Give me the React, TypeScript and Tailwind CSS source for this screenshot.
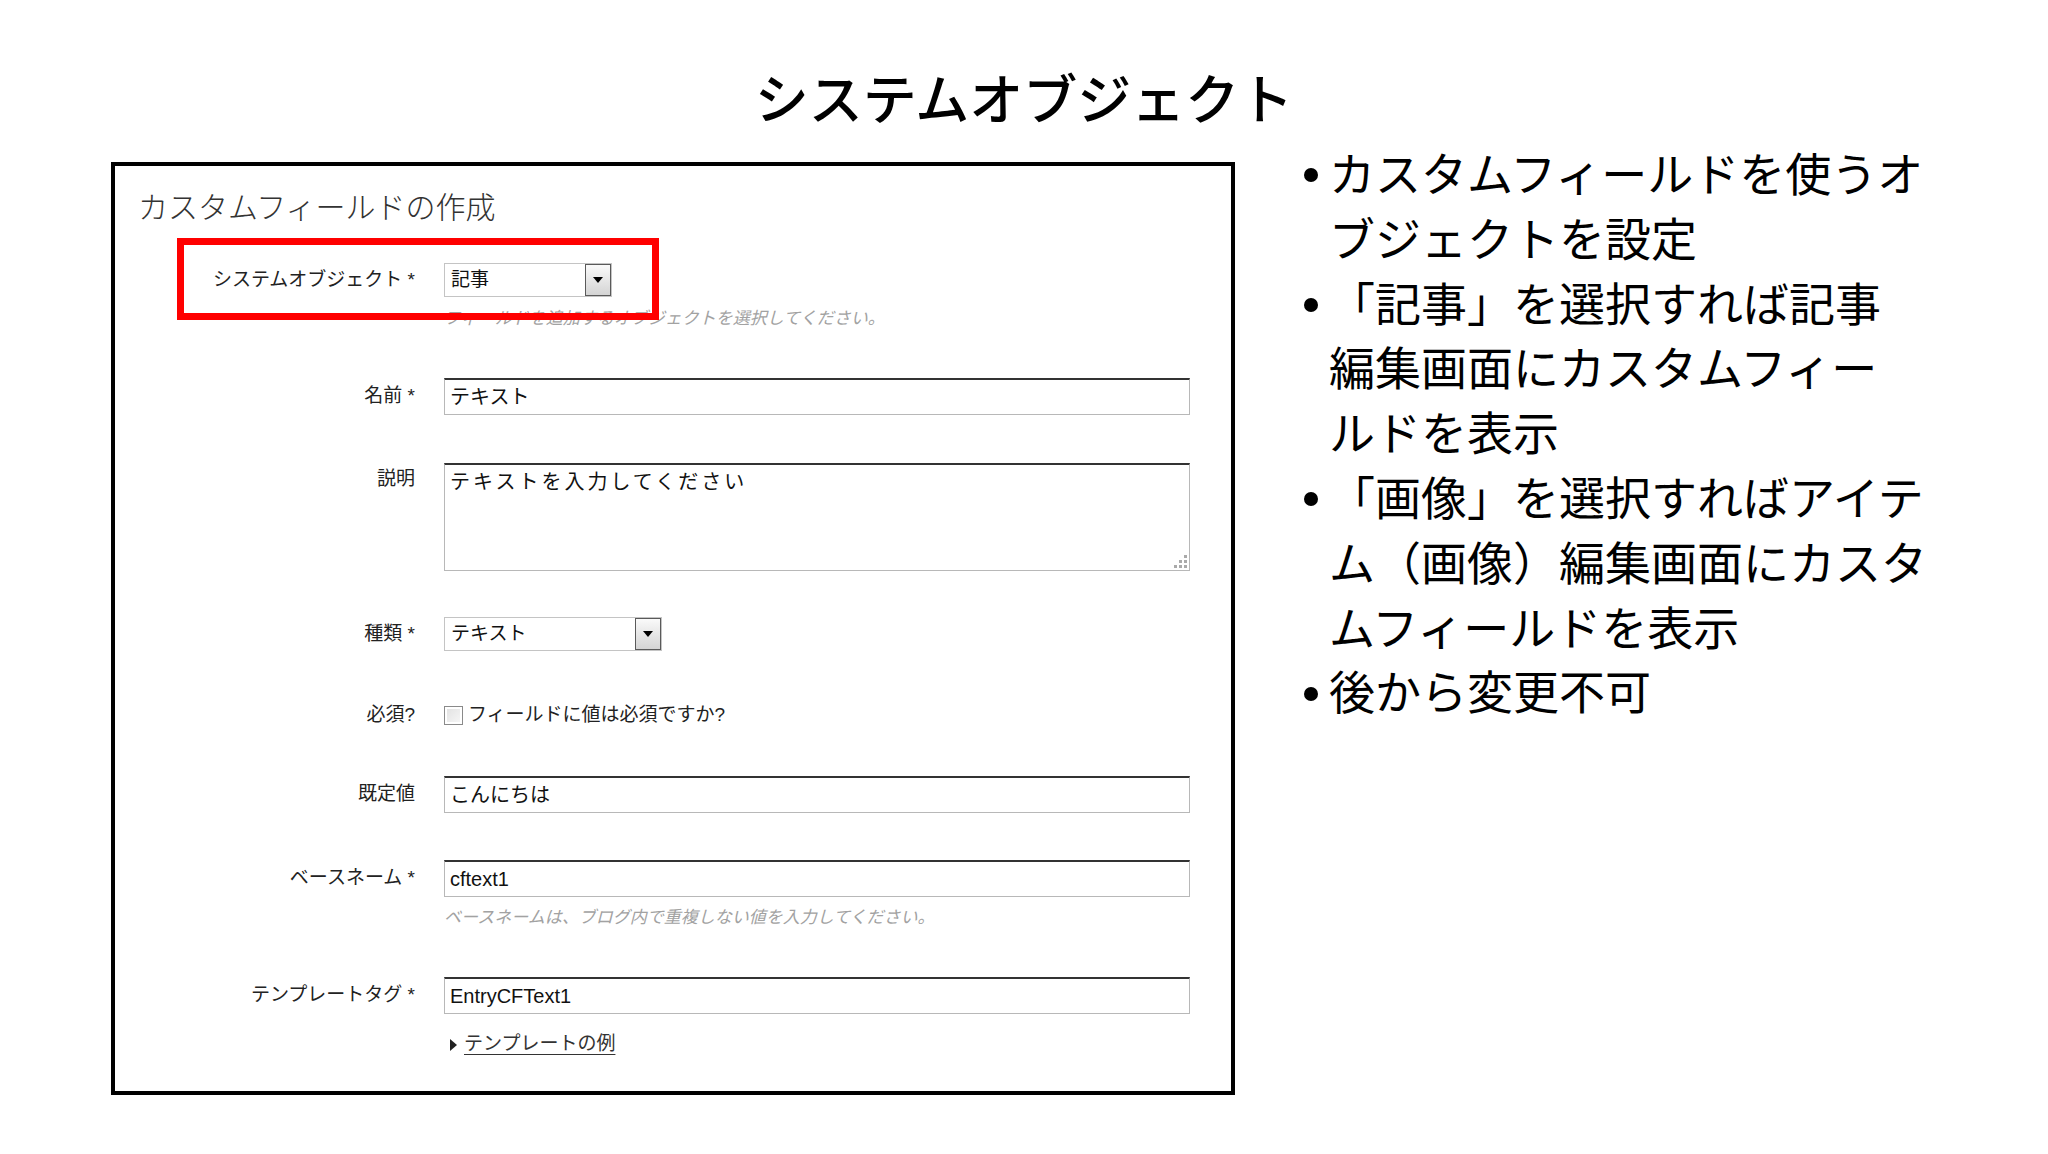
const jp = '[font-family:"Liberation_Sans","Noto_Sans_CJK_JP",sans-serif]';

function Arrow() {
  return (
    <span className="flex h-full w-[26px] items-center justify-center border border-[#5a5a5a] bg-gradient-to-b from-[#fafafa] to-[#d4d4d4]">
      <span className="h-0 w-0 border-x-[5px] border-t-[6px] border-x-transparent border-t-black" />
    </span>
  );
}

function Select({ value, width }: { value: string; width: string }) {
  return (
    <div className={`flex h-[34px] items-center border border-[#c4c4c4] bg-white ${width}`}>
      <span className="flex-1 pl-[6px] text-[19px] text-[#111]">{value}</span>
      <Arrow />
    </div>
  );
}

function TextInput({ value }: { value: string }) {
  return (
    <div className="flex h-[37px] w-[746px] items-center border border-[#b8b8b8] border-t-2 border-t-[#333] bg-white pl-[5px] text-[20px] text-[#111]">
      {value}
    </div>
  );
}

function Row({ label, children, top = false }: { label: string; children: React.ReactNode; top?: boolean }) {
  return (
    <div className={`flex ${top ? 'items-start' : 'items-center'}`}>
      <div className={`w-[300px] text-right text-[19px] text-[#222] ${top ? 'pt-[2px]' : ''}`}>{label}</div>
      <div className="ml-[29px]">{children}</div>
    </div>
  );
}

function Hint({ text }: { text: string }) {
  return <div className="ml-[329px] text-[17px] italic leading-[20px] text-[#a2a2a2]">{text}</div>;
}

const bullets: string[][] = [
  ['カスタムフィールドを使うオ', 'ブジェクトを設定'],
  ['「記事」を選択すれば記事', '編集画面にカスタムフィー', 'ルドを表示'],
  ['「画像」を選択すればアイテ', 'ム（画像）編集画面にカスタ', 'ムフィールドを表示'],
  ['後から変更不可'],
];

export default function App() {
  return (
    <div className={`h-[1154px] w-[2048px] overflow-hidden bg-white text-black ${jp}`}>
      <h1 className="pt-[68px] text-center text-[54px] font-medium leading-[67px]">システムオブジェクト</h1>

      <div className="mt-[8px] flex items-start">
        <div className="relative ml-[111px] mt-[19px] box-border h-[933px] w-[1124px] border-4 border-black">
          <div className="pl-[23px] pt-[24px] text-[30px] font-light leading-[36px] text-[#333]">
            カスタムフィールドの作成
          </div>

          <div className="mt-[37px]">
            <Row label="システムオブジェクト *">
              <Select value="記事" width="w-[168px]" />
            </Row>
          </div>
          <div className="mt-[12px]">
            <Hint text="フィールドを追加するオブジェクトを選択してください。" />
          </div>

          <div className="mt-[49px]">
            <Row label="名前 *">
              <TextInput value="テキスト" />
            </Row>
          </div>

          <div className="mt-[48px]">
            <Row label="説明" top>
              <div className="relative h-[108px] w-[746px] border border-[#b8b8b8] border-t-2 border-t-[#333] bg-white pl-[5px] pt-[2px] text-[20px] tracking-[3px] text-[#111]">
                テキストを入力してください
                <div className="absolute bottom-[2px] right-[2px] grid grid-cols-3 gap-[2px]">
                  <span className="h-[3px] w-[3px]" />
                  <span className="h-[3px] w-[3px]" />
                  <span className="h-[3px] w-[3px] bg-[#aaa]" />
                  <span className="h-[3px] w-[3px]" />
                  <span className="h-[3px] w-[3px] bg-[#aaa]" />
                  <span className="h-[3px] w-[3px] bg-[#aaa]" />
                  <span className="h-[3px] w-[3px] bg-[#aaa]" />
                  <span className="h-[3px] w-[3px] bg-[#aaa]" />
                  <span className="h-[3px] w-[3px] bg-[#aaa]" />
                </div>
              </div>
            </Row>
          </div>

          <div className="mt-[46px]">
            <Row label="種類 *">
              <Select value="テキスト" width="w-[218px]" />
            </Row>
          </div>

          <div className="mt-[50px]">
            <Row label="必須?">
              <div className="flex h-[24px] items-center">
                <span className="h-[19px] w-[19px] border border-[#8a8a8a] bg-gradient-to-br from-[#e0e0e0] to-[#f8f8f8] shadow-[inset_0_0_0_2px_#fff]" />
                <span className="ml-[5px] text-[19px] text-[#222]">フィールドに値は必須ですか?</span>
              </div>
            </Row>
          </div>

          <div className="mt-[46px]">
            <Row label="既定値">
              <TextInput value="こんにちは" />
            </Row>
          </div>

          <div className="mt-[47px]">
            <Row label="ベースネーム *">
              <TextInput value="cftext1" />
            </Row>
          </div>
          <div className="mt-[11px]">
            <Hint text="ベースネームは、ブログ内で重複しない値を入力してください。" />
          </div>

          <div className="mt-[49px]">
            <Row label="テンプレートタグ *">
              <TextInput value="EntryCFText1" />
            </Row>
          </div>

          <div className="ml-[335px] mt-[19px] flex h-[24px] items-center">
            <span className="h-0 w-0 border-y-[6px] border-l-[7px] border-y-transparent border-l-[#222]" />
            <span className="ml-[7px] text-[19px] text-[#333] underline underline-offset-4">テンプレートの例</span>
          </div>

          <div className="absolute left-[62px] top-[72px] h-[82px] w-[482px] border-[7px] border-[#ff0000]" />
        </div>

        <ul className="ml-[69px] text-[46px] leading-[64.8px] whitespace-nowrap">
          {bullets.map((lines, i) => (
            <li key={i} className="flex">
              <span className="flex h-[64.8px] w-[25px] items-center">
                <span className="h-[14px] w-[14px] rounded-full bg-black" />
              </span>
              <div>
                {lines.map((l, j) => (
                  <div key={j}>{l}</div>
                ))}
              </div>
            </li>
          ))}
        </ul>
      </div>
    </div>
  );
}
